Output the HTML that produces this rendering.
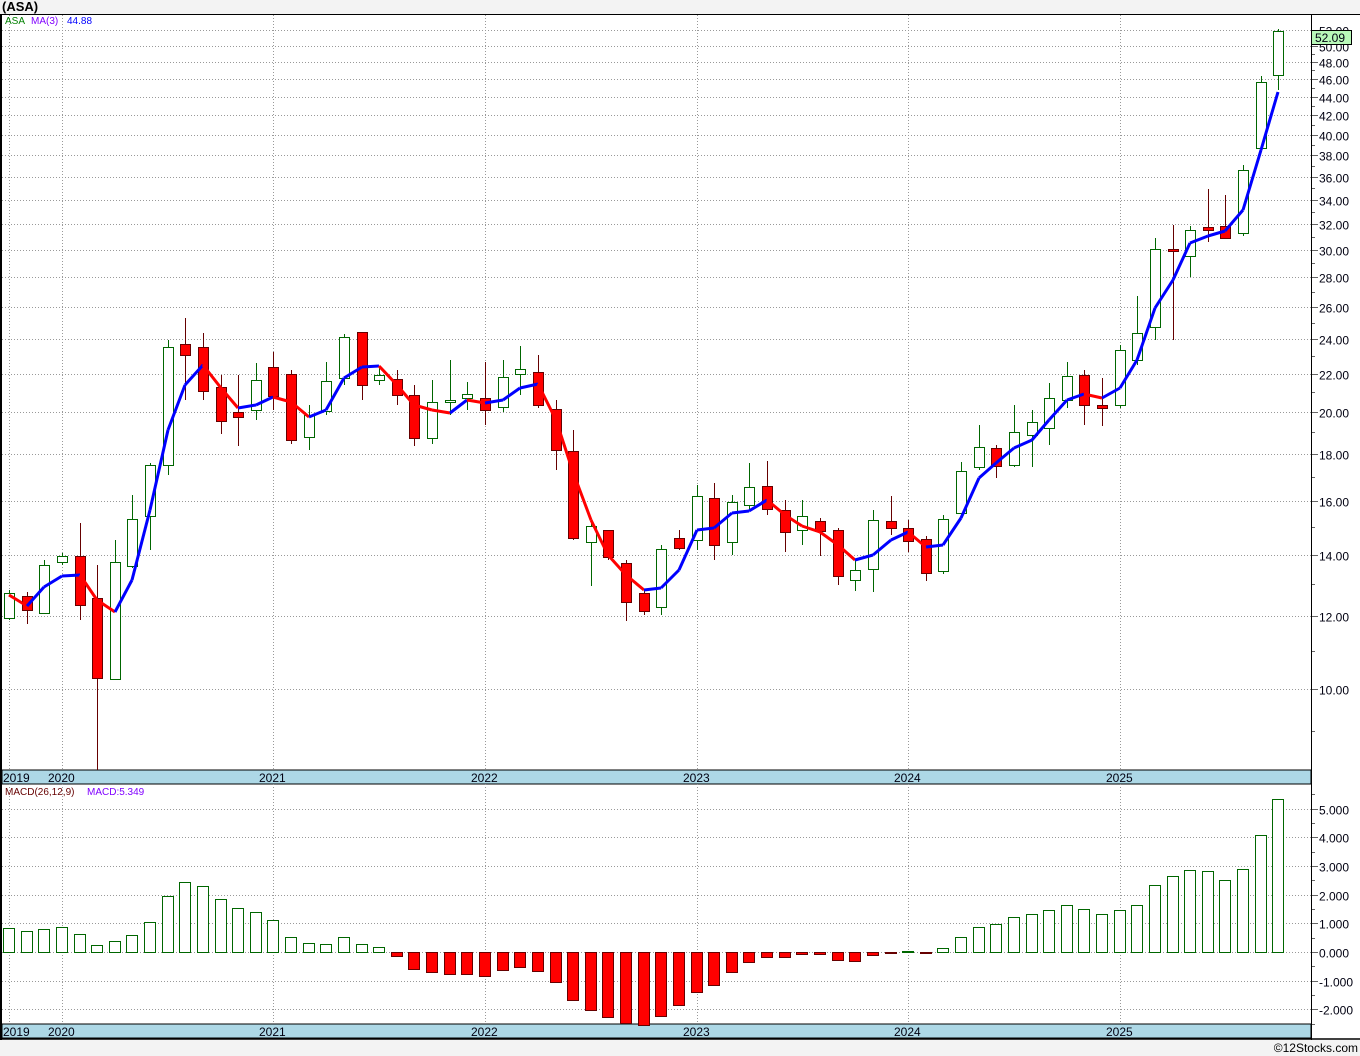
<!DOCTYPE html>
<html><head><meta charset="utf-8"><style>
body{margin:0;background:#f3f3f3;width:1360px;height:1056px;overflow:hidden;font-family:"Liberation Sans",sans-serif}
svg{position:absolute;left:0;top:0}
</style></head><body>
<svg id="s" width="1360" height="1056" xmlns="http://www.w3.org/2000/svg" font-family="Liberation Sans, sans-serif">
<rect x="0" y="0" width="1360" height="1056" fill="#f3f3f3"/>
<rect x="2" y="14" width="1309" height="1024" fill="#fff"/>
<rect x="1311" y="14" width="49" height="1026" fill="#fff"/>
<text x="2" y="11" font-size="13" font-weight="bold">(ASA)</text>
<text x="1358" y="1052" font-size="12" text-anchor="end">©12Stocks.com</text>
<rect x="2" y="770" width="1309" height="14" fill="#add8e6" stroke="#000" stroke-width="1"/>
<rect x="2" y="1024" width="1309" height="14" fill="#add8e6" stroke="#000" stroke-width="1"/>
<g id="g"></g>
<line x1="0" y1="14.5" x2="1360" y2="14.5" stroke="#000"/>
<line x1="1" y1="14" x2="1" y2="1040" stroke="#000" stroke-width="2"/>
<line x1="1311.5" y1="14" x2="1311.5" y2="1040" stroke="#000"/>
<line x1="0" y1="1039" x2="1360" y2="1039" stroke="#000" stroke-width="1.5"/>
<text x="5" y="24" font-size="10" fill="#008000">ASA</text>
<text x="31" y="24" font-size="10" fill="#8000ff">MA(3)</text>
<text x="67" y="24" font-size="10" fill="#0000ff">44.88</text>
<text x="5" y="795" font-size="10" fill="#600">MACD(26,12,9)</text>
<text x="87" y="795" font-size="10" fill="#8000ff">MACD:5.349</text>
</svg>
<script>
var g=document.getElementById('g'),h='';
function L(a,b,c,d,st,w,da){h+='<line x1="'+a+'" y1="'+b+'" x2="'+c+'" y2="'+d+'" stroke="'+st+'" stroke-width="'+(w||1)+'"'+(da?' stroke-dasharray="'+da+'"':'')+'/>';}
function T(x,y,t,s,a){h+='<text x="'+x+'" y="'+y+'" font-size="'+(s||12)+'"'+(a?' text-anchor="'+a+'"':'')+' fill="#001">'+t+'</text>';}
function py(p){return 689-399.7*Math.log(p/10);}
var vg=[9,62,273,485,697,908,1120];
vg.forEach(function(x){L(x+.5,15,x+.5,770,'#999',1,'1,2');L(x+.5,784,x+.5,1024,'#999',1,'1,2');});
for(var p=10;p<=52;p+=2){var y=Math.round(py(p))+.5;L(2,y,1311,y,'#999',1,'1,2');L(1311,y,1318,y,'#666');T(1319,y+5,p.toFixed(2));}
for(var p=9;p<=52;p+=1){var y=Math.round(py(p))+.5;L(1311,y,1315,y,'#666');}
for(var v=-2;v<=5;v++){var y=Math.round(952-28.7*v)+.5;L(2,y,1311,y,'#999',1,'1,2');L(1311,y,1318,y,'#666');T(1319,y+5,(v<0?'-':'')+Math.abs(v).toFixed(3));}
for(var v=-2.5;v<=5.5;v+=0.5){var y=Math.round(952-28.7*v)+.5;L(1311,y,1315,y,'#666');}
var yrs=[['2019',3],['2020',48],['2021',259],['2022',471],['2023',683],['2024',894],['2025',1106]];
yrs.forEach(function(a){T(a[1],782,a[0],12);T(a[1],1036,a[0],12);});
var C=[[593,618,590,620,0],[596,610,592,624,1],[565,613,560,613,0],[556,562,553,565,0],[556,605,523,620,1],[598,678,565,770,1],[562,679,540,679,0],[519,566,495,568,0],[465,516,463,550,0],[347,465,340,475,0],[344,355,318,400,1],[347,391,333,400,1],[387,421,375,434,1],[412,417,375,446,1],[380,410,363,420,0],[367,396,352,410,1],[374,440,370,444,1],[415,437,405,450,0],[381,411,362,415,0],[337,378,334,385,0],[332,385,332,400,1],[375,380,367,385,0],[379,395,370,405,1],[395,438,385,446,1],[402,438,380,444,0],[400,402,360,415,0],[394,398,382,410,0],[398,410,362,425,1],[377,407,360,412,0],[369,374,346,395,0],[372,405,355,408,1],[409,450,400,470,1],[451,538,430,540,1],[526,542,522,586,0],[530,557,530,560,1],[563,602,560,621,1],[593,611,590,615,1],[549,607,545,615,0],[538,548,530,550,1],[496,540,485,550,0],[498,545,483,560,1],[502,542,495,555,0],[487,505,463,510,0],[486,509,461,515,1],[510,532,500,552,1],[516,530,500,545,0],[521,531,518,556,1],[530,576,528,585,1],[570,580,560,591,0],[520,569,510,592,0],[521,528,496,535,1],[528,541,520,552,1],[539,573,536,581,1],[519,571,515,574,0],[471,513,462,515,0],[447,467,425,470,0],[448,466,445,478,1],[432,465,405,467,0],[422,435,410,467,0],[398,428,383,445,0],[376,400,362,408,0],[375,405,370,425,1],[405,408,378,426,1],[350,405,345,408,0],[333,360,296,365,0],[249,327,238,340,0],[249,251,225,340,1],[230,256,226,277,0],[227,230,189,242,1],[226,238,195,239,1],[170,233,165,236,0],[82,148,76,150,0],[31,75,29,90,0]];
var M=[595,606,587,576,575,600,612,580,510,430,385,365,388,408,405,397,402,417,410,378,367,366,385,405,410,413,400,403,400,388,384,420,472,520,555,575,590,588,570,530,528,513,511,500,515,526,532,545,560,555,540,532,547,545,518,478,463,448,440,420,400,394,398,388,360,308,280,243,236,231,210,150,92];
var D=[928,931,929,927,934,945,941,935,922,896,882,886,899,908,912,920,937,943,944,937,944,947,956,969,972,974,974,976,970,967,971,982,1000,1010,1017,1023,1025,1016,1005,992,985,972,962,957,957,954,954,960,961,955,953,951,953,948,937,927,924,917,914,910,905,909,914,910,905,885,876,870,871,880,869,835,799];
function X(i){return Math.round(9+i*17.63);}
C.forEach(function(c,i){var x=X(i);var dn=c[4];var wc=dn?'#600':'#060';
L(x+.5,c[2],x+.5,Math.min(c[3],770),wc);
var t=Math.min(c[0],c[1]),b=Math.max(c[0],c[1]);if(b-t<2)b=t+2;
h+='<rect x="'+(x-5+.5)+'" y="'+(t+.5)+'" width="10" height="'+(b-t)+'" fill="'+(dn?'#f00':'#fff')+'" stroke="'+(dn?'#600':'#060')+'"/>';});
for(var i=0;i<M.length-1;i++){var c=M[i+1]>M[i]?'#f00':'#00f';L(X(i),M[i],X(i+1),M[i+1],c,3);}
D.forEach(function(d,i){var x=X(i);if(d<=952){h+='<rect x="'+(x-6+.5)+'" y="'+(d+.5)+'" width="11" height="'+(952-d)+'" fill="#fff" stroke="#060"/>';}else{h+='<rect x="'+(x-6+.5)+'" y="952.5" width="11" height="'+(d-952)+'" fill="#f00" stroke="#600"/>';}});
h+='<rect x="1311.5" y="30.5" width="40" height="14" fill="#b8f8b8" stroke="#000"/>';
T(1315,42,'52.09');
g.innerHTML=h;
</script>
</body></html>
